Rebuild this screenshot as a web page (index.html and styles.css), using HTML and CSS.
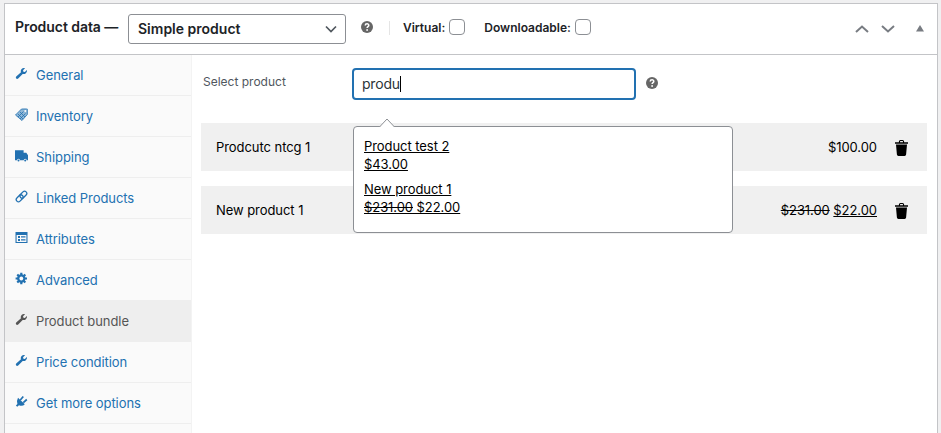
FILE: index.html
```html
<!DOCTYPE html>
<html lang="en">
<head>
<meta charset="utf-8">
<title>Product data</title>
<link rel="stylesheet" href="styles.css">
</head>
<body>
<svg class="defs" width="0" height="0">
  <symbol id="wrench" viewBox="0 0 20 20"><path d="M16.7 9.5c-1.3 1.3-3.2 1.7-4.9 1.1l-6.9 7.1c-.9.9-2.300.9-3 0s-.9-2.300 0-3.100l7.300-6.700c-.7-1.700-.3-3.700 1-5C11.600 1.500 13.700 1.200 15.400 2l-3 3 .500 2.300 2.300.500 3-3c.700 1.600.200 3.400-1.500 4.700z"/></symbol>
  <symbol id="help" viewBox="0 0 12 12"><circle cx="6" cy="6" r="6"/><path d="M4.200 4.500C4.300 2.200 7.900 2.300 7.800 4.400 7.700 5.700 6.100 5.600 6.100 7.100" fill="none" stroke="#fff" stroke-width="1.500"/><circle cx="6.100" cy="9" r=".9" fill="#fff"/></symbol>
  <symbol id="trash" viewBox="0 0 13 16"><path d="M0 2.200h3.900V1.500Q3.900 0 5.400 0h2.200q1.500 0 1.500 1.500v.7H13v1.600H0zM5 2.200h3v-.600q0-.500-.500-.500h-2q-.500 0-.500.500zM1 4.400h11l-.9 10.200q-.1 1.400-1.500 1.400H3.400q-1.400 0-1.500-1.400z"/></symbol>
</svg>
<section class="panel">
  <header class="head">
    <span class="title">Product data —</span>
    <div class="select"><span>Simple product</span><svg width="12" height="8" viewBox="0 0 12 8"><path d="M1 1.500l5 5 5-5"/></svg></div>
    <svg class="help head-help"><use href="#help"/></svg>
    <i class="divider"></i>
    <label class="check virtual">Virtual:<i class="box"></i></label>
    <label class="check download">Downloadable:<i class="box"></i></label>
    <div class="order">
      <svg width="14" height="8" viewBox="0 0 14 8"><path d="M1 7l6-5.500L13 7"/></svg>
      <svg width="14" height="8" viewBox="0 0 14 8"><path d="M1 1l6 5.500L13 1"/></svg>
      <svg class="toggle" width="8" height="7" viewBox="0 0 8 7"><path d="M4 0l4 6.500H0z"/></svg>
    </div>
  </header>
  <div class="body">
    <nav class="tabs">
      <a class="tab"><svg class="icon"><use href="#wrench"/></svg><span>General</span></a>
      <a class="tab"><svg class="icon" viewBox="0 0 13 13"><path d="M.5 7L6.500 1 10.500.800l2 1v4.500L7 12.500z" opacity=".5"/><path d="M.5 7L6.500 1h5.800v5.500L7 12.500zM3 6l5 5M5 4l5 5M3 9l5.500-5.500M5 11l5.500-5.500" fill="none" stroke="currentColor" stroke-width=".8"/><circle cx="10.300" cy="2.900" r="1" fill="#fafafa"/></svg><span>Inventory</span></a>
      <a class="tab"><svg class="icon" viewBox="0 0 13 13"><path d="M0 1.200h8.600v2.600h2.700L13 6.300v5h-1.300a1.500 1.500 0 0 0-3 0H5a1.500 1.500 0 0 0-3 0H0z"/><circle cx="3.500" cy="11.500" r="1"/><circle cx="10.200" cy="11.500" r="1"/></svg><span>Shipping</span></a>
      <a class="tab"><svg class="icon" viewBox="0 0 13 13"><g fill="none" stroke="currentColor" stroke-width="1.300" transform="rotate(-45 6.500 6.500)"><rect x="0" y="4.300" width="7.800" height="4.400" rx="2.200"/><rect x="5.200" y="4.300" width="7.800" height="4.400" rx="2.200"/></g></svg><span>Linked Products</span></a>
      <a class="tab"><svg class="icon" viewBox="0 0 13 13"><path d="M.5 1h12v11H.5z"/><path d="M1.600 4h9.800v7H1.600z" fill="#fafafa"/><path d="M3 5h2v2H3zM6 5.300h4.500v1.200H6zM3 8h2v2H3zM6 8.300h4.500v1.200H6z"/></svg><span>Attributes</span></a>
      <a class="tab"><svg class="icon" viewBox="0 0 13 13"><path d="M5.200.8h2.200v11.400H5.200zM.6 5.400H12v2.200H.6z"/><path d="M5.200.8h2.200v11.400H5.200zM.6 5.400H12v2.200H.6z" transform="rotate(45 6.300 6.500)"/><circle cx="6.300" cy="6.500" r="4.200"/><circle cx="6.300" cy="6.500" r="1.900" fill="#fafafa"/></svg><span>Advanced</span></a>
      <a class="tab active"><svg class="icon"><use href="#wrench"/></svg><span>Product bundle</span></a>
      <a class="tab"><svg class="icon"><use href="#wrench"/></svg><span>Price condition</span></a>
      <a class="tab"><svg class="icon" viewBox="0 0 13 13"><path d="M3 2.800l6.800 6.400Q7.500 11.600 4 10.200L2.200 11.800.9 10.500l1.500-1.600Q1.500 5.500 3 2.800z"/><path d="M5.300 5l3-3.500M8.300 7.700l3.500-3.200" fill="none" stroke="currentColor" stroke-width="1.700"/></svg><span>Get more options</span></a>
    </nav>
    <main class="content">
      <div class="field">
        <span class="label">Select product</span>
        <div class="input">produ<i class="caret"></i></div>
        <svg class="help"><use href="#help"/></svg>
        <div class="results">
          <svg class="arrow" width="16" height="9" viewBox="0 0 16 9"><path d="M.5 9L8 1l7.500 8"/></svg>
          <a>Product test 2<br>$43.00</a>
          <a>New product 1<br><del>$231.00</del> $22.00</a>
        </div>
      </div>
      <div class="item"><span>Prodcutc ntcg 1</span><span class="price">$100.00</span><svg class="trash"><use href="#trash"/></svg></div>
      <div class="item"><span>New product 1</span><span class="price"><del>$231.00</del> <ins>$22.00</ins></span><svg class="trash"><use href="#trash"/></svg></div>
    </main>
  </div>
</section>
</body>
</html>
```
FILE: styles.css
```css
* { box-sizing: border-box; }
body { margin: 0; padding: 3px 3px 0 4px; height: 433px; overflow: hidden; background: #f0f0f1; font: 13px/18px Inter, sans-serif; color: #1d2327; }
svg { display: block; flex: none; }
.defs { position: absolute; }
.panel { height: 430px; border: 1px solid #c3c4c7; border-bottom: 0; background: #fff; }
.head { display: flex; height: 51px; border-bottom: 1px solid #c3c4c7; padding-left: 10px; font-weight: 600; }
.title { width: 113px; padding-top: 14px; font-size: 14px; letter-spacing: -.06px; white-space: nowrap; }
.select { display: flex; align-items: center; justify-content: space-between; width: 218px; height: 30px; margin-top: 10px; padding: 0 8px 0 9px; border: 1px solid #8c8f94; border-radius: 3px; font-size: 14px; }
.select svg path { fill: none; stroke: #50575e; stroke-width: 1.7; }
.help { width: 12px; height: 12px; fill: #666; }
.head-help { margin: 17px 0 0 15px; }
.divider { width: 1px; height: 14px; margin: 17px 12px 0 16px; background: #e5e5e5; }
.check { display: flex; align-items: center; height: 18px; margin-top: 15px; font-size: 12px; }
.virtual { margin-left: 1px; }
.box { width: 16px; height: 16px; margin: -2px 0 0 4px; border: 1px solid #8c8f94; border-radius: 4px; }
.download { margin-left: 19px; }
.order { display: flex; margin: 21px 13px 0 auto; gap: 12px; }
.order path { fill: none; stroke: #787c82; stroke-width: 2; }
.order .toggle { margin-left: 9px; }
.order .toggle path { fill: #787c82; stroke: none; }
.body { display: flex; height: 378px; }
.tabs { width: 187px; height: 378px; overflow: hidden; border-right: 1px solid #f3f3f3; background: #fafafa; }
.tab { display: flex; height: 41px; padding: 12px 0 0 10px; border-bottom: 1px solid #eee; color: #2271b1; line-height: 16px; letter-spacing: -.06px; }
.icon { width: 13px; height: 13px; margin-right: 8px; fill: currentColor; }
.tab.active { background: #eee; color: #555; }
.content { flex: 1; margin-left: -1px; padding: 13px 10px 0 11px; }
.field { position: relative; display: flex; left: -1px; height: 55px; }
.label { width: 151px; padding: 5px 0 0 2px; font-size: 12px; color: #50575e; }
.input { display: flex; align-items: center; width: 284px; height: 32px; padding-left: 8px; border: 2px solid #2271b1; border-radius: 4px; font-size: 14px; letter-spacing: -.2px; color: #2c3338; }
.caret { width: 1px; height: 16px; background: #000; }
.field > .help { margin: 9px 0 0 10px; }
.results { position: absolute; z-index: 1; left: 152px; top: 58px; width: 380px; height: 107px; padding: 10px; border: 1px solid #8c8f94; border-radius: 4px; background: #fff; }
.results a { display: block; margin-bottom: 6px; color: #000; line-height: 18.3px; text-decoration: underline; letter-spacing: -.06px; }
.arrow { position: absolute; left: 25px; top: -9px; }
.arrow path { fill: #fff; stroke: #8c8f94; }
.item { display: flex; align-items: center; height: 48px; margin: 0 0 15.4px -1px; padding: 0 19px 0 15px; background: #f0f0f0; color: #000; letter-spacing: -.06px; }
.price { margin-left: auto; }
.trash { width: 13px; height: 16px; margin: 2px 0 0 18px; }
```
